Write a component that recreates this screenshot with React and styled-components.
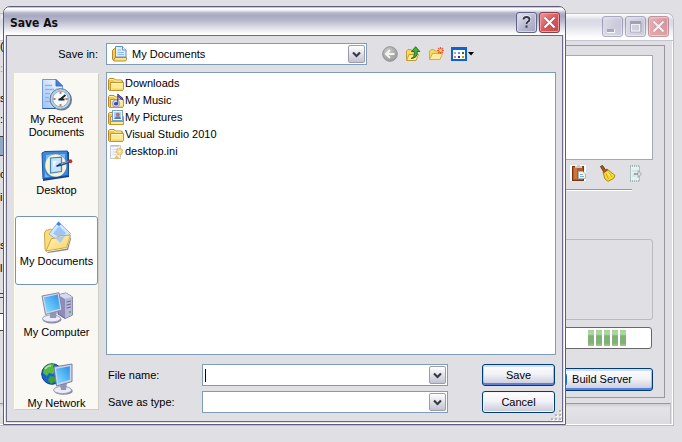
import React, { useState } from 'react'
import { styled, createGlobalStyle } from 'styled-components'

const App = () => {

    const [place, setPlace] = useState('My Documents');
    const [fileName, setFileName] = useState('');

  return (
    <Desktop>
      <GlobalStyle />
      <BuilderWindow />

      <Dialog role='dialog' aria-labelledby='dialog-title'>
        <TitleBar>
            <Title id='dialog-title'>Save As</Title>
            <TitleButton aria-label='Help'><HelpGlyph /></TitleButton>
            <TitleButton $close aria-label='Close'><CloseGlyph /></TitleButton>
        </TitleBar>

        <Body>
            <LookIn>
                <LookInLabel htmlFor='save-in'>Save in:</LookInLabel>
                <LookInCombo>
                    <DocumentsSmall />
                    <Select id='save-in' defaultValue='My Documents'>
                        <option>My Documents</option>
                    </Select>
                    <Arrow />
                </LookInCombo>
                <Tools>
                    <ToolButton aria-label='Back'><BackIcon /></ToolButton>
                    <ToolButton aria-label='Up one level'><UpIcon /></ToolButton>
                    <ToolButton aria-label='New folder'><NewFolderIcon /></ToolButton>
                    <ToolButton aria-label='Views'><ViewsIcon /></ToolButton>
                </Tools>
            </LookIn>

            <Columns>
                <Places>
                    {places.map(({ name, Icon }) => (
                        <Place key={name} $active={place === name} onClick={ () => setPlace(name) }>
                            <Icon />
                            <span>{name}</span>
                        </Place>
                    ))}
                </Places>

                <Main>
                    <FileList>
                        {files.map(({ name, Icon }) => (
                            <FileRow key={name}><Icon />{name}</FileRow>
                        ))}
                    </FileList>

                    <Form>
                        <label htmlFor='file-name'>File name:</label>
                        <Combo>
                            <Caret />
                            <Input id='file-name' type='text' value={fileName}
                                onChange={ (e) => setFileName(e.target.value) } />
                            <Arrow />
                        </Combo>
                        <FormButton $default>Save</FormButton>

                        <label htmlFor='file-type'>Save as type:</label>
                        <Combo>
                            <Select id='file-type' />
                            <Arrow />
                        </Combo>
                        <FormButton>Cancel</FormButton>
                    </Form>
                </Main>
            </Columns>
        </Body>
        <Grip />
      </Dialog>
    </Desktop>
  )
}

const BuilderWindow = () => (
    <BackWindow>
        <BackTitleBar>
            <TitleButton aria-label='Minimize'><MinimizeGlyph /></TitleButton>
            <TitleButton aria-label='Maximize'><MaximizeGlyph /></TitleButton>
            <TitleButton $close aria-label='Close'><CloseGlyph /></TitleButton>
        </BackTitleBar>
        <BackBody>
            <Edge>
                {edgeRows.map(({ text, height, box, faded }, i) => (
                    <EdgeRow key={i} $height={height} $faded={faded}>
                        {text}
                        {box && <EdgeBox $height={box.height} $color={box.color} />}
                    </EdgeRow>
                ))}
            </Edge>
            <Panel>
                <TextArea aria-label='Output' />
                <PanelTools>
                    <ToolButton aria-label='Paste'><ClipboardIcon /></ToolButton>
                    <ToolButton aria-label='Clear'><BroomIcon /></ToolButton>
                    <ToolButton aria-label='Export'><ExportIcon /></ToolButton>
                </PanelTools>
                <Rule />
                <Group />
                <Progress role='progressbar' aria-label='Build progress'>
                    <Chunk /><Chunk /><Chunk /><Chunk /><Chunk />
                </Progress>
                <BuildButton $default><ServerIcon />Build Server</BuildButton>
            </Panel>
        </BackBody>
        <StatusBar />
    </BackWindow>
)

const Arrow = () => (
    <ArrowButton type='button' aria-label='Open list'>
        <svg width='9' height='7' viewBox='0 0 9 7'>
            <path d='M1 1.5 L4.5 5 L8 1.5' fill='none' stroke='#3a3a44' strokeWidth='2.2' />
        </svg>
    </ArrowButton>
)

const HelpGlyph = () => (
    <svg width='13' height='14' viewBox='0 0 13 14'>
        <path d='M3.5 4.5 Q3.5 2 6.5 2 Q9.5 2 9.5 4.5 Q9.5 6 7.7 6.8 Q6.5 7.4 6.5 9' fill='none' stroke='#fff' strokeWidth='3.4' opacity='.7' />
        <path d='M3.5 4.5 Q3.5 2 6.5 2 Q9.5 2 9.5 4.5 Q9.5 6 7.7 6.8 Q6.5 7.4 6.5 9' fill='none' stroke='#35354b' strokeWidth='2' />
        <rect x='5.5' y='10.5' width='2' height='2.2' fill='#35354b' />
    </svg>
)

const CloseGlyph = () => (
    <svg width='13' height='13' viewBox='0 0 13 13'>
        <path d='M1.5 1.5 L11.5 11.5 M11.5 1.5 L1.5 11.5' stroke='#8a3038' strokeWidth='3.4' opacity='.5' />
        <path d='M1.5 1.5 L11.5 11.5 M11.5 1.5 L1.5 11.5' stroke='#fff' strokeWidth='2.2' />
    </svg>
)

const MinimizeGlyph = () => (
    <svg width='13' height='13' viewBox='0 0 13 13'>
        <rect x='1' y='9' width='8' height='4' fill='#fff' />
        <rect x='1' y='9' width='7' height='3' fill='#66667c' />
    </svg>
)

const MaximizeGlyph = () => (
    <svg width='13' height='13' viewBox='0 0 13 13'>
        <path d='M1.5 2 V12 H12 V2' fill='none' stroke='#66667c' />
        <rect x='2.5' y='4.5' width='8' height='6.5' fill='none' stroke='#fff' />
        <rect x='1' y='1' width='11' height='3' fill='#66667c' />
    </svg>
)

const FolderShape = () => (
    <>
        <path d='M.5 3.5 L1.5 2.5 H6 L7.5 4 H13.5 L14.5 5 V14.5 H1.5 L.5 13.5 Z' fill='#f2c84b' stroke='#b98a24' />
        <path d='M1.5 3.5 H5.6 L7 5 H13' fill='none' stroke='#fff3b4' />
        <path d='M2.5 6.5 H15.5 V13.5 L14.5 14.5 H2.5 Z' fill='#ffe994' stroke='#c5962e' />
        <path d='M3.5 7.5 H14.5' stroke='#fffbd6' />
        <path d='M4 13.2 H15' stroke='#efc95c' />
    </>
)

const FolderIcon = () => (
    <svg width='16' height='16' viewBox='0 0 16 16'><FolderShape /></svg>
)

const MusicIcon = () => (
    <svg width='16' height='16' viewBox='0 0 16 16'>
        <FolderShape />
        <circle cx='8' cy='10.5' r='3.6' fill='#d4d9ee' stroke='#9a9dc0' />
        <ellipse cx='8' cy='10.8' rx='2.2' ry='1.7' fill='#4548b5' />
        <path d='M9.7 10.5 V1 L14.5 5.2 V7 L10.5 4' fill='#5b5ec9' stroke='#33368c' strokeWidth='.8' />
    </svg>
)

const PicturesIcon = () => (
    <svg width='16' height='16' viewBox='0 0 16 16'>
        <FolderShape />
        <rect x='4.5' y='.5' width='10' height='10' fill='#fff' stroke='#7c9cc8' />
        <rect x='6' y='2' width='7' height='7' fill='#a9d4fa' />
        <circle cx='9.8' cy='4.6' r='1.9' fill='#e0604a' />
        <path d='M6 9 L8 6.5 H12 L13 9 Z' fill='#507ec4' />
        <path d='M2.5 11.5 H15.5 V14.5 H2.5 Z' fill='#ffe994' stroke='#c5962e' />
    </svg>
)

const IniIcon = () => (
    <svg width='16' height='16' viewBox='0 0 16 16'>
        <path d='M2.5 1.5 H12.5 V14.5 H2.5 Z' fill='#f4f6fb' stroke='#c6cbd8' />
        <path d='M4 1 V3 M6 1 V3 M8 1 V3 M10 1 V3' stroke='#a9b1c4' />
        <path d='M4.5 5.5 H10 M4.5 8 H8 M4.5 10.5 H8' stroke='#d5dae6' />
        <circle cx='11.5' cy='7.5' r='3.4' fill='#f2d48a' stroke='#d8b45e' strokeDasharray='2 1' />
        <circle cx='11.5' cy='7.5' r='1' fill='#fff' />
        <path d='M6 15 L8.5 11 L12 15 Z' fill='#e9bf68' />
    </svg>
)

const DocumentsSmall = () => (
    <svg width='17' height='16' viewBox='0 0 17 16'>
        <path d='M1.5 4.5 L3.5 2.5 H6 V14.5 H2.5 L1.5 13 Z' fill='#f7cf55' stroke='#b98a24' />
        <path d='M4.5 .5 H11.5 L15 4 V11 H4.5 Z' fill='#dfefff' stroke='#5f8fce' />
        <path d='M11.5 .5 V4 H15' fill='#fff' stroke='#5f8fce' />
        <path d='M6.5 4 H10 M6.5 6.5 H13 M6.5 8.5 H13' stroke='#8db8ea' />
        <path d='M2.5 14.5 L4 11.5 H15.5 V13.5 L14.5 15 H3 Z' fill='#ffe385' stroke='#b98a24' />
    </svg>
)

const BackIcon = () => (
    <svg width='16' height='16' viewBox='0 0 16 16'>
        <defs>
            <radialGradient id='back' cx='.4' cy='.3' r='.7'>
                <stop offset='0' stopColor='#c9c9c9' />
                <stop offset='1' stopColor='#9b9b9b' />
            </radialGradient>
        </defs>
        <circle cx='8' cy='8' r='7.3' fill='url(#back)' stroke='#939393' />
        <path d='M12.5 8 H4.5 M8 4 L4 8 L8 12' fill='none' stroke='#f3f3f3' strokeWidth='2' />
    </svg>
)

const UpIcon = () => (
    <svg width='16' height='16' viewBox='0 0 16 16'>
        <path d='M1.5 5 L3 3.5 H6 L7 5 H10.5 V14.5 H1.5 Z' fill='#f8d860' stroke='#c79d32' />
        <path d='M1.5 14.5 L4 8.5 H13.5 L11 14.5 Z' fill='#ffec96' stroke='#c79d32' />
        <path d='M6 12.5 Q10 11.5 9.3 5.5 H6.5 L10.6 .7 L14.8 5.5 H12.2 Q13 12 6 12.5 Z' fill='#41ae3c' stroke='#1d6a1e' strokeWidth='.9' />
    </svg>
)

const NewFolderIcon = () => (
    <svg width='16' height='16' viewBox='0 0 16 16'>
        <path d='M1.5 5 L3 3.5 H6 L7 5 H11.5 V13.5 H1.5 Z' fill='#f8d860' stroke='#d6ac45' />
        <path d='M1.5 13.5 L4.5 7.5 H14.5 L12 13.5 Z' fill='#ffed9d' stroke='#d6ac45' />
        <path d='M12.5 1 V8 M9 4.5 H16 M10 2 L15 7 M15 2 L10 7' stroke='#f2582e' strokeWidth='1.2' />
        <circle cx='12.5' cy='4.5' r='1.4' fill='#ffd79c' />
    </svg>
)

const ViewsIcon = () => (
    <svg width='23' height='16' viewBox='0 0 23 16'>
        <path d='M1 2 H15 V14 H1 Z' fill='#fff' stroke='#0d63d6' strokeWidth='2' />
        <rect x='0' y='1' width='16' height='3' fill='#0d63d6' />
        <rect x='3' y='6' width='2' height='2' fill='#a8a8b8' />
        <rect x='7' y='6' width='2' height='2' fill='#6a8fe0' />
        <rect x='11' y='6' width='2' height='2' fill='#12812a' />
        <rect x='3' y='10' width='2' height='2' fill='#ef7b5e' />
        <rect x='7' y='10' width='2' height='2' fill='#17389c' />
        <rect x='11' y='10' width='2' height='2' fill='#c69a10' />
        <path d='M17 6 H23 L20 9.4 Z' fill='#000' />
    </svg>
)

const RecentIcon = () => (
    <svg width='32' height='32' viewBox='0 0 32 32'>
        <defs>
            <linearGradient id='page' x1='0' y1='1' x2='1' y2='0'>
                <stop offset='0' stopColor='#9cc2f5' />
                <stop offset='1' stopColor='#fff' />
            </linearGradient>
        </defs>
        <path d='M1.5 .5 H15 L21.5 7 V29.5 H1.5 Z' fill='url(#page)' stroke='#6f98dc' />
        <path d='M1.5 29.5 H20' stroke='#2f58a8' />
        <path d='M15 .5 V7 H21.5 Z' fill='#3f7de0' stroke='#3f6fc4' />
        <path d='M4 6.5 H11 M4 10.5 H13 M4 14.5 H9 M4 18.5 H8 M4 22.5 H9' stroke='#8cb2ee' strokeWidth='1.4' />
        <circle cx='20.5' cy='21' r='10.5' fill='#6d7f92' />
        <circle cx='19.5' cy='20' r='10.4' fill='#b9d0e2' stroke='#5a7898' />
        <circle cx='19.5' cy='20' r='7.8' fill='#f4fbff' stroke='#7fb4d8' />
        <path d='M19.5 12.8 V15 M19.5 25 V27.2 M12.3 20 H14.5 M24.5 20 H26.7' stroke='#f06a32' strokeWidth='1.8' />
        <path d='M24.5 16 L19 20.5 M23.5 20.5 H17.5' stroke='#17202c' strokeWidth='1.8' />
    </svg>
)

const DesktopIcon = () => (
    <svg width='32' height='32' viewBox='0 0 32 32'>
        <path d='M2 5 L28 2 V27 L2 31 Z' fill='#123f8e' />
        <path d='M1 3 L4 1.5 L26.5 1 L27.5 25.5 L2 29 Z' fill='#3c86dc' stroke='#1a519f' />
        <path d='M5 5 L12 4 Q4 9 5 14 Z M24 4 V10 Q22 5 18 4 Z M4 21 Q5 26 9 27 L4 27 Z' fill='#79b8f7' />
        <ellipse cx='14.8' cy='15.5' rx='10.6' ry='11.2' fill='#fff2c3' />
        <path d='M9.5 8 L20.5 7.2 V21.5 L9.5 23 Z' fill='#c5e3ff' stroke='#3c82d4' strokeWidth='1.2' />
        <path d='M12 11 L16 10.7 L12 18 Z' fill='#eef8ff' />
        <path d='M18 15.2 L29 11.5' stroke='#28518f' strokeWidth='2.8' />
        <path d='M20 14 L28 11.3' stroke='#7da9dd' strokeWidth='1.2' />
        <path d='M15.5 16.2 L18.5 15' stroke='#222' strokeWidth='1.6' />
        <circle cx='29.3' cy='11.3' r='2' fill='#cf2e1c' />
    </svg>
)

const DocumentsIcon = () => (
    <svg width='32' height='32' viewBox='0 0 32 32'>
        <defs>
            <linearGradient id='folder' x1='0' y1='0' x2='1' y2='1'>
                <stop offset='0' stopColor='#fff6bd' />
                <stop offset='1' stopColor='#f8d264' />
            </linearGradient>
        </defs>
        <path d='M6 31 L26 27.5 L30 15 V18 L27 29 L7 32 Z' fill='#938b78' />
        <path d='M3.5 12 L5 9.5 L10 8 L13 10.5 L25 10 L26 17 L5 30.5 L4 28 Z' fill='#f9dd7c' stroke='#d0a745' />
        <path d='M8 13 L17.5 .8 L29.5 12.5 L20 22 Z' fill='#d3e6fc' stroke='#8fb4e6' />
        <path d='M12 12.5 L18 5 L25 12 L20 18 Z' fill='#9cc6f8' />
        <path d='M15.5 3.2 L17.5 .8 L20 3.2 L18 5 Z' fill='#2f82e6' />
        <path d='M5 30 L10.5 17.5 L16 17 L18 15 L29.5 14 L25.5 26.5 Z' fill='url(#folder)' stroke='#d0a745' />
        <path d='M14 17 L24 15 L19.5 22 Z' fill='#a5cdf8' />
    </svg>
)

const ScreenDefs = () => (
    <defs>
        <linearGradient id='screen' x1='0' y1='1' x2='1' y2='0'>
            <stop offset='0' stopColor='#86e4ff' />
            <stop offset='1' stopColor='#2c8eeb' />
        </linearGradient>
    </defs>
)

const ComputerIcon = () => (
    <svg width='32' height='32' viewBox='0 0 32 32'>
        <ScreenDefs />
        <path d='M17 3 L25 1 L31.5 5 V23 L24 26.5 L17 22 Z' fill='#8d8dbb' stroke='#62628f' />
        <path d='M24 7 L31.5 5 V23 L24 26.5 Z' fill='#b6b6d8' />
        <path d='M17 3 L25 1 L31.5 5 L24 7 Z' fill='#d8d8ee' />
        <path d='M25.5 10 L30 9 M25.5 13 L30 12 M25.5 16 L30 15' stroke='#66668f' />
        <rect x='28' y='19' width='2' height='2' fill='#4fc143' />
        <ellipse cx='11' cy='27.5' rx='9.5' ry='4' fill='#8585a4' />
        <ellipse cx='10.5' cy='26.5' rx='9' ry='3.5' fill='#ececf6' stroke='#a0a0be' />
        <path d='M9 20 L16 19 L15 26 H9 Z' fill='#9494b5' />
        <path d='M1 4 L18 .7 L21 18 L4.5 22.5 Z' fill='#d4d7ea' stroke='#8587ab' />
        <path d='M3 5.5 L16.8 2.6 L19 16.7 L5.8 20.3 Z' fill='url(#screen)' />
    </svg>
)

const NetworkIcon = () => (
    <svg width='32' height='32' viewBox='0 0 32 32'>
        <ScreenDefs />
        <circle cx='11' cy='11' r='10.3' fill='#1765cb' stroke='#0f3d8c' />
        <path d='M3 5 Q8 0 13 1 L12 4 L15 7 L12 11 L8 10 L6 13 L2 10 Z' fill='#55bb3e' />
        <path d='M9 13 L14 14 L14 18 L10 21 L7 17 Z' fill='#3fa332' />
        <path d='M4 6 Q7 2 10 3' stroke='#b7eaa6' strokeWidth='1.6' fill='none' />
        <ellipse cx='22.5' cy='28' rx='9.3' ry='3.8' fill='#8585a4' />
        <ellipse cx='21.5' cy='27' rx='9' ry='3.6' fill='#ececf6' stroke='#a0a0be' />
        <path d='M19 21 L26 20 L25 27 H20 Z' fill='#9494b5' />
        <path d='M13 4 L31 1 V18.5 L15.5 23 Z' fill='#cfd3e8' stroke='#7b7ea5' />
        <path d='M15 5.7 L28.8 3.2 V16.8 L17 20.6 Z' fill='url(#screen)' />
    </svg>
)

const ClipboardIcon = () => (
    <svg width='16' height='16' viewBox='0 0 16 16'>
        <rect width='16' height='16' fill='#fff' />
        <rect x='2.5' y='1.5' width='11' height='14' fill='#b25a2b' stroke='#7b3512' />
        <path d='M4 3 H7 V14 H4 Z' fill='#cb7540' />
        <path d='M5 3 V1 H7 V0 H10 V1 H12 V3 Z' fill='#c9ccd4' />
        <path d='M8.5 6.5 H13 L15.5 9 V13.5 H8.5 Z' fill='#eef7f8' stroke='#a2b8bf' />
        <path d='M10 9.5 H13 M10 11.5 H14' stroke='#8fabb3' />
    </svg>
)

const BroomIcon = () => (
    <svg width='17' height='17' viewBox='0 0 17 17'>
        <path d='M1.5 1.5 L3.5 .5 L6.5 5 L4.5 6.5 Z' fill='#9b6220' stroke='#63390e' />
        <path d='M4 7 L8 4 L16 10.5 L14.5 13.5 L9 16.3 L6 14 Z' fill='#f5de2e' stroke='#a78812' />
        <path d='M4.2 7.5 L8.5 4.5' stroke='#cf3a24' strokeWidth='1.8' />
        <path d='M7 8.5 L9.5 14 M9.5 7.5 L13 12' stroke='#c8a614' />
        <path d='M8 7 L11 11' stroke='#fff7a8' />
    </svg>
)

const ExportIcon = () => (
    <svg width='14' height='17' viewBox='0 0 14 17'>
        <path d='M1 1 H11 V16 H1 Z' fill='#e5f2f2' />
        <path d='M1.5 1 V16 M10.5 1 V16' stroke='#aac4c6' />
        <path d='M1 1 H11 M1 16 H11' stroke='#8fa9ad' strokeWidth='1.6' strokeDasharray='1 1' />
        <path d='M3 6 H8 M3 11 H7' stroke='#c3d7d8' />
        <path d='M5 8.5 H9 V5.5 L12.5 9 L9 12.5 V9.5 H5 Z' fill='#dfe6e8' stroke='#89989d' strokeWidth='.8' />
    </svg>
)

const ServerIcon = () => (
    <svg width='14' height='14' viewBox='0 0 14 14'>
        <rect x='.5' y='.5' width='12' height='12' rx='2' fill='#27a9ee' stroke='#1170c0' />
        <path d='M8 2 H11 V11 H8 Z' fill='#70d5ff' />
    </svg>
)

const Grip = () => (
    <GripArea>
        <svg width='12' height='12' viewBox='0 0 12 12'>
            {[[9, 1], [5, 5], [9, 5], [1, 9], [5, 9], [9, 9]].map(([x, y]) => (
                <g key={`${x}-${y}`}>
                    <rect x={x + 1} y={y + 1} width='2' height='2' fill='#fff' />
                    <rect x={x} y={y} width='2' height='2' fill='#b8b5aa' />
                </g>
            ))}
        </svg>
    </GripArea>
)

const places = [
    { name: 'My Recent Documents', Icon: RecentIcon },
    { name: 'Desktop', Icon: DesktopIcon },
    { name: 'My Documents', Icon: DocumentsIcon },
    { name: 'My Computer', Icon: ComputerIcon },
    { name: 'My Network', Icon: NetworkIcon },
];

const files = [
    { name: 'Downloads', Icon: FolderIcon },
    { name: 'My Music', Icon: MusicIcon },
    { name: 'My Pictures', Icon: PicturesIcon },
    { name: 'Visual Studio 2010', Icon: FolderIcon },
    { name: 'desktop.ini', Icon: IniIcon },
];

// what still shows of the window's left column beside the dialog
const edgeRows = [
    { text: '(', height: 22 },
    { text: ':', height: 30, faded: true },
    { text: 's', height: 21 },
    { text: ':', height: 22 },
    { height: 33, box: { height: 20, color: '#8fa9c4' } },
    { text: 'c', height: 23 },
    { text: 'i', height: 48 },
    { text: 's', height: 23 },
    { text: 'l', height: 30 },
    { height: 20, box: { height: 5, color: '#e0dfe3' } },
    { height: 20, box: { height: 18, color: '#fff' } },
];

const GlobalStyle = createGlobalStyle`
    * {
        box-sizing: border-box;
    }

    body {
        margin: 0;
        background: #e0dfe3;
        color: #000;
        font: 11px/13px "Liberation Sans", Arial, sans-serif;
    }

    button, input, select {
        font: inherit;
        color: inherit;
    }

    svg {
        display: block;
        flex: none;
    }
`;

const Desktop = styled.div`
    position: relative;
    min-height: 100vh;
    overflow: hidden;
`;

const Dialog = styled.section`
    position: absolute;
    top: 6px;
    left: 3px;
    right: 116px;
    background: #e0dfe3;
    border: 1px solid #5e5d7d;
    border-radius: 7px 7px 0 0;
    box-shadow: inset 1px 0 #fff, inset -1px 0 #fff, inset 0 -1px #fff;
    padding: 0 2px 2px;
`;

const TitleBar = styled.header`
    display: flex;
    align-items: center;
    gap: 2px;
    height: 28px;
    margin: 0 -2px;
    padding: 2px 5px 0 6px;
    border-radius: 6px 6px 0 0;
    background: linear-gradient(#8f8fae 0, #fff 1px, #f4f4f9 3px, #b4b4ca 6px, #a8a8c2 9px, #babace 14px, #e0e0ea 21px, #fff 27px);
`;

const Title = styled.h1`
    flex: 1;
    margin: 0;
    padding-top: 2px;
    font: bold 12px/16px "DejaVu Sans Condensed", "DejaVu Sans", sans-serif;
    color: #0e1010;
`;

const TitleButton = styled.button`
    display: flex;
    align-items: center;
    justify-content: center;
    width: 21px;
    height: 21px;
    padding: 0;
    border: 1px solid ${props => props.$close ? '#8d3c4a' : '#62648a'};
    border-radius: 3px;
    background: ${props => props.$close
        ? 'linear-gradient(135deg, #ec9a98, #d9595c 50%, #c04a4c)'
        : 'linear-gradient(135deg, #e6e6f0, #b8b9d0 55%, #a2a3c0)'};
    box-shadow: inset 0 0 0 1px ${props => props.$close ? '#ee9c9c' : '#d4d4e4'};
`;

const Body = styled.div`
    display: flex;
    flex-direction: column;
    gap: 7px;
    padding: 7px 6px 8px 7px;
    border: 1px solid #6b6a8a;
`;

const LookIn = styled.div`
    display: flex;
    align-items: center;
`;

const LookInLabel = styled.label`
    width: 84px;
    margin-right: 8px;
    text-align: right;
`;

const Combo = styled.div`
    display: flex;
    align-items: center;
    min-width: 0;
    height: 22px;
    padding: 1px;
    border: 1px solid #7f9db9;
    background: #fff;
`;

const LookInCombo = styled(Combo)`
    flex: 0 1 261px;
    padding-left: 4px;
`;

const Select = styled.select`
    flex: 1;
    min-width: 0;
    padding: 0 4px;
    border: 0;
    background: transparent;
    appearance: none;
    outline: none;
`;

const Input = styled.input`
    flex: 1;
    min-width: 0;
    padding: 0;
    border: 0;
    outline: none;
    background: transparent;
`;

const Caret = styled.span`
    width: 1px;
    height: 13px;
    margin-left: 1px;
    background: #000;
`;

const ArrowButton = styled.button`
    display: flex;
    align-items: center;
    justify-content: center;
    width: 17px;
    height: 18px;
    padding: 0;
    border: 1px solid #9c9cae;
    border-radius: 2px;
    background: linear-gradient(#fff, #e4e4ec 45%, #c2c2d4);
`;

const Tools = styled.div`
    display: flex;
    gap: 7px;
    margin-left: 15px;
`;

const ToolButton = styled.button`
    display: flex;
    padding: 0;
    border: 0;
    background: none;
`;

const Columns = styled.div`
    display: flex;
    gap: 8px;
`;

const Places = styled.nav`
    display: flex;
    flex-direction: column;
    gap: 2px;
    width: 85px;
    height: 337px;
    margin: 1px -1px 0 0;
    overflow: hidden;
    border: 1px solid #fffde8;
    border-right-color: #cfcdc4;
    border-bottom-color: #cfcdc4;
    background: #f9f8f3;
`;

const Place = styled.button`
    display: flex;
    flex: none;
    flex-direction: column;
    align-items: center;
    gap: 2px;
    height: 69px;
    padding: 4px 8px;
    border: 1px solid ${props => props.$active ? '#7396b8' : 'transparent'};
    border-radius: 3px;
    background: ${props => props.$active ? '#fff' : 'transparent'};

    span {
        flex: none;
        margin: 0 -8px;
        max-width: 76px;
        text-align: center;
    }
`;

const Main = styled.div`
    display: flex;
    flex: 1;
    flex-direction: column;
    gap: 9px;
    min-width: 0;
`;

const FileList = styled.ul`
    min-height: 283px;
    margin: 0;
    padding: 2px 1px;
    border: 1px solid #7f9db9;
    background: #fff;
    list-style: none;
`;

const FileRow = styled.li`
    display: flex;
    align-items: center;
    gap: 1px;
    height: 17px;
`;

const Form = styled.div`
    display: grid;
    grid-template-columns: 94px minmax(0, 246px) 1fr;
    align-items: center;
    row-gap: 5px;
    padding: 0 1px 0 2px;
`;

const Button = styled.button`
    display: flex;
    align-items: center;
    justify-content: center;
    height: 22px;
    border: 1px solid #003c74;
    border-radius: 3px;
    background: linear-gradient(#fff, #f2f2f7 45%, #c8c8da);
    box-shadow: ${props => props.$default
        ? 'inset 0 2px #cfddfb, inset 0 -2px #5a7fdc, inset 1px 0 #b5c8f5, inset -1px 0 #a6bcf0'
        : 'inset 0 0 0 1px #f4f4fa'};
`;

const FormButton = styled(Button)`
    justify-self: end;
    width: 73px;
`;

const GripArea = styled.div`
    position: absolute;
    right: 3px;
    bottom: 3px;
`;

const BackWindow = styled.section`
    position: absolute;
    top: 13px;
    left: 0;
    right: 8px;
    border: 1px solid #bcbbca;
    border-left: 0;
    border-radius: 0 7px 0 0;
    box-shadow: inset -1px 0 #fff, inset 0 -1px #fff;
`;

const BackTitleBar = styled(TitleBar)`
    justify-content: flex-end;
    height: 27px;
    margin: 0;
    padding: 0 4px 1px 0;
    background: linear-gradient(#fff, #d9d9e4 6px, #dedee8 11px, #fff 24px);
    border-bottom: 1px solid #c4c3d2;

    button {
        opacity: .5;
    }
`;

const BackBody = styled.div`
    display: flex;
    padding: 4px 8px 5px 0;
`;

const Edge = styled.div`
    width: 12px;
    margin-top: -4px;
`;

const EdgeRow = styled.div`
    height: ${props => props.$height}px;
    line-height: 10px;
    color: ${props => props.$faded ? '#9a9a9a' : '#000'};
`;

const EdgeBox = styled.div`
    height: ${props => props.$height}px;
    border: 1px solid #444;
    border-width: 1px 0;
    background: ${props => props.$color};
`;

const Panel = styled.div`
    display: flex;
    flex: 1;
    flex-direction: column;
    min-width: 0;
    padding: 9px 11px 6px 50%;
    border: 1px solid #99989f;
    border-left: 0;
`;

const TextArea = styled.textarea`
    height: 105px;
    margin: 0;
    border: 1px solid #a3a9b3;
    background: #fff;
    resize: none;
`;

const PanelTools = styled.div`
    display: flex;
    justify-content: flex-end;
    gap: 13px;
    height: 17px;
    margin: 5px 10px 7px 0;
`;

const Rule = styled.hr`
    align-self: stretch;
    height: 2px;
    margin: 0 21px 48px 0;
    border: 0;
    border-top: 1px solid #99989c;
    background: #fff;
`;

const Group = styled.div`
    height: 81px;
    border: 1px solid #bdb9c0;
    border-radius: 3px;
`;

const Progress = styled.div`
    display: flex;
    justify-content: flex-end;
    gap: 2px;
    height: 22px;
    margin: 7px 1px 0 0;
    padding: 2px 25px 2px 2px;
    border: 1px solid #686868;
    border-radius: 3px;
    background: #fff;
`;

const Chunk = styled.span`
    width: 6px;
    background: linear-gradient(#a5cf9a, #b0dba5 4px, #82b077 6px, #82b077 13px, #a0c896);
`;

const BuildButton = styled(Button)`
    justify-content: flex-end;
    gap: 4px;
    height: 23px;
    margin-top: 19px;
    padding: 0 20px;
`;

const StatusBar = styled.footer`
    height: 21px;
    margin: 0 2px 1px 0;
    border-top: 1px solid #99989f;
    border-right: 1px solid #c4c3c4;
    background: linear-gradient(#cfced2, #e4e3e6 4px, #dcdbdf);
`;

export default App
